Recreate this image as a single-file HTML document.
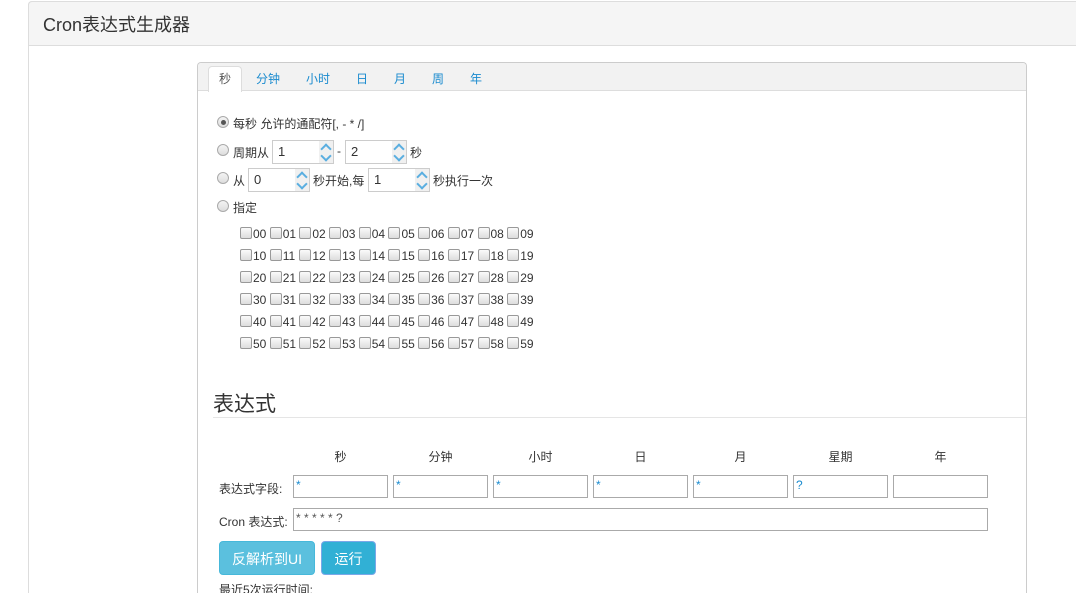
<!DOCTYPE html>
<html><head><meta charset="utf-8"><style>
*{box-sizing:border-box;margin:0;padding:0}
html,body{width:1076px;height:593px;overflow:hidden}
body{background:#fff;font-family:"Liberation Sans","Noto Sans CJK SC",sans-serif;font-size:12px;color:#333;position:relative}
.a{position:absolute;white-space:nowrap}
.panel{position:absolute;left:28px;top:1px;width:1048px;height:592px;border:1px solid #ddd;border-right:none;border-bottom:none;border-radius:4px 0 0 0}
.ph{position:absolute;left:28px;top:1px;width:1048px;height:45px;background:#f5f5f5;border:1px solid #ddd;border-right:none;border-radius:4px 0 0 0}
.box{position:absolute;left:197px;top:62px;width:830px;height:531px;border:1px solid #ccc;border-bottom:none;border-radius:4px 4px 0 0}
.tabs{position:absolute;left:198px;top:63px;width:828px;height:28px;background:#f2f2f2;border-bottom:1px solid #ddd;border-radius:4px 4px 0 0}
.tab{position:absolute;top:70px;color:#1a8bcf;font-size:12px}
.act{position:absolute;left:208px;top:66px;width:34px;height:26px;background:#fff;border:1px solid #ddd;border-bottom:none;border-radius:4px 4px 0 0;text-align:center;line-height:24px;color:#555}
.rad{position:absolute;width:12px;height:12px;border-radius:50%;border:1px solid #aaa;background:linear-gradient(#f4f4f4,#ddd)}
.rad.on::after{content:"";position:absolute;left:2.5px;top:2.5px;width:5px;height:5px;border-radius:50%;background:#555}
.sp{position:absolute;height:24px;width:62px;border:1px solid #ccc;background:#fff;font-size:13px;line-height:22px;padding-left:5px}
.sp i{position:absolute;right:0;top:0;width:14px;height:22px;background:#f0f0f0}
.sp i::before,.sp i::after{content:"";position:absolute;left:3px;width:6px;height:6px;border:solid #5aaee0;border-width:2px 0 0 2px}
.sp i::before{top:4px;transform:rotate(45deg)}
.sp i::after{top:11px;transform:rotate(225deg)}
.row{position:absolute;left:240px;font-size:12px;line-height:14px}
.row span{display:inline-block;width:29.7px}
.cb{display:inline-block;width:12px;height:12px;border:1px solid #999;border-radius:2px;background:linear-gradient(#fafafa,#ddd);vertical-align:-1px;margin-right:1px}
.in{position:absolute;height:23px;width:95px;border:1px solid #aaa;font-size:12px;color:#1a8bcf;padding-left:2px;line-height:18px}
.hd{position:absolute;top:448px;width:95px;text-align:center}
.btn{position:absolute;top:541px;height:34px;border-radius:4px;color:#fff;font-size:14px;text-align:center;line-height:34px}
</style></head><body>
<div class="panel"></div>
<div class="ph"></div>
<div class="a" style="left:43px;top:11px;font-size:18px;color:#333">Cron表达式生成器</div>
<div class="box"></div>
<div class="tabs"></div>
<div class="act">秒</div>
<div class="tab" style="left:256px">分钟</div>
<div class="tab" style="left:306px">小时</div>
<div class="tab" style="left:356px">日</div>
<div class="tab" style="left:394px">月</div>
<div class="tab" style="left:432px">周</div>
<div class="tab" style="left:470px">年</div>

<div class="rad on" style="left:217px;top:116px"></div>
<div class="a" style="left:233px;top:115px">每秒 允许的通配符[, - * /]</div>
<div class="rad" style="left:217px;top:144px"></div>
<div class="a" style="left:233px;top:144px">周期从</div>
<div class="sp" style="left:272px;top:140px">1<i></i></div>
<div class="a" style="left:337px;top:144px">-</div>
<div class="sp" style="left:345px;top:140px">2<i></i></div>
<div class="a" style="left:410px;top:144px">秒</div>
<div class="rad" style="left:217px;top:172px"></div>
<div class="a" style="left:233px;top:172px">从</div>
<div class="sp" style="left:248px;top:168px">0<i></i></div>
<div class="a" style="left:313px;top:172px">秒开始,每</div>
<div class="sp" style="left:368px;top:168px">1<i></i></div>
<div class="a" style="left:433px;top:172px">秒执行一次</div>
<div class="rad" style="left:217px;top:200px"></div>
<div class="a" style="left:233px;top:199px">指定</div>

<div class="row" style="top:227px"><span><i class="cb"></i>00</span><span><i class="cb"></i>01</span><span><i class="cb"></i>02</span><span><i class="cb"></i>03</span><span><i class="cb"></i>04</span><span><i class="cb"></i>05</span><span><i class="cb"></i>06</span><span><i class="cb"></i>07</span><span><i class="cb"></i>08</span><span><i class="cb"></i>09</span></div>
<div class="row" style="top:249px"><span><i class="cb"></i>10</span><span><i class="cb"></i>11</span><span><i class="cb"></i>12</span><span><i class="cb"></i>13</span><span><i class="cb"></i>14</span><span><i class="cb"></i>15</span><span><i class="cb"></i>16</span><span><i class="cb"></i>17</span><span><i class="cb"></i>18</span><span><i class="cb"></i>19</span></div>
<div class="row" style="top:271px"><span><i class="cb"></i>20</span><span><i class="cb"></i>21</span><span><i class="cb"></i>22</span><span><i class="cb"></i>23</span><span><i class="cb"></i>24</span><span><i class="cb"></i>25</span><span><i class="cb"></i>26</span><span><i class="cb"></i>27</span><span><i class="cb"></i>28</span><span><i class="cb"></i>29</span></div>
<div class="row" style="top:293px"><span><i class="cb"></i>30</span><span><i class="cb"></i>31</span><span><i class="cb"></i>32</span><span><i class="cb"></i>33</span><span><i class="cb"></i>34</span><span><i class="cb"></i>35</span><span><i class="cb"></i>36</span><span><i class="cb"></i>37</span><span><i class="cb"></i>38</span><span><i class="cb"></i>39</span></div>
<div class="row" style="top:315px"><span><i class="cb"></i>40</span><span><i class="cb"></i>41</span><span><i class="cb"></i>42</span><span><i class="cb"></i>43</span><span><i class="cb"></i>44</span><span><i class="cb"></i>45</span><span><i class="cb"></i>46</span><span><i class="cb"></i>47</span><span><i class="cb"></i>48</span><span><i class="cb"></i>49</span></div>
<div class="row" style="top:337px"><span><i class="cb"></i>50</span><span><i class="cb"></i>51</span><span><i class="cb"></i>52</span><span><i class="cb"></i>53</span><span><i class="cb"></i>54</span><span><i class="cb"></i>55</span><span><i class="cb"></i>56</span><span><i class="cb"></i>57</span><span><i class="cb"></i>58</span><span><i class="cb"></i>59</span></div>

<div class="a" style="left:213px;top:388px;font-size:21px;color:#333">表达式</div>
<div class="a" style="left:213px;top:417px;width:813px;height:1px;background:#e5e5e5"></div>

<div class="hd" style="left:293px">秒</div>
<div class="hd" style="left:393px">分钟</div>
<div class="hd" style="left:493px">小时</div>
<div class="hd" style="left:593px">日</div>
<div class="hd" style="left:693px">月</div>
<div class="hd" style="left:793px">星期</div>
<div class="hd" style="left:893px">年</div>
<div class="a" style="left:219px;top:480px">表达式字段:</div>
<div class="in" style="left:293px;top:475px">*</div>
<div class="in" style="left:393px;top:475px">*</div>
<div class="in" style="left:493px;top:475px">*</div>
<div class="in" style="left:593px;top:475px">*</div>
<div class="in" style="left:693px;top:475px">*</div>
<div class="in" style="left:793px;top:475px">?</div>
<div class="in" style="left:893px;top:475px"></div>
<div class="a" style="left:219px;top:513px">Cron 表达式:</div>
<div class="in" style="left:293px;top:508px;width:695px;color:#555">* * * * * ?</div>
<div class="btn" style="left:219px;width:96px;background:#5bc0de;border:1px solid #46b8da">反解析到UI</div>
<div class="btn" style="left:321px;width:55px;background:#31b0d5;border:1px solid #7aa7e8">运行</div>
<div class="a" style="left:219px;top:583px;height:10px;overflow:hidden;line-height:14px">最近5次运行时间:</div>
</body></html>
